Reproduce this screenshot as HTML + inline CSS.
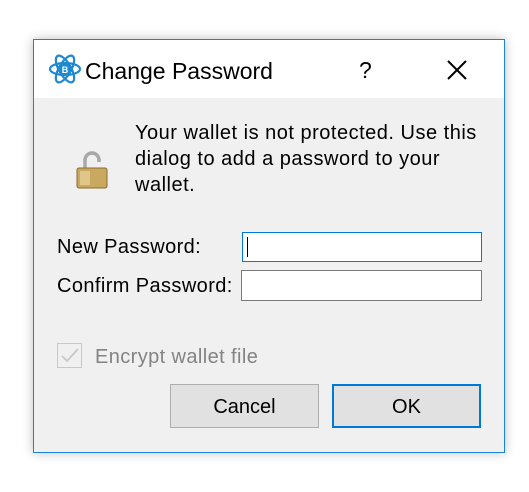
<!DOCTYPE html>
<html><head><style>
body{margin:0;width:529px;height:492px;background:#fff;position:relative;font-family:"Liberation Sans",sans-serif;overflow:hidden}
.win{position:absolute;left:33px;top:39px;width:470px;height:412px;border:1px solid #1883d7;background:#f0f0f0;box-shadow:0 0 10px rgba(0,0,0,.25)}
.tb{position:absolute;left:0;top:0;width:470px;height:58px;background:#fff}
.t{position:absolute;white-space:nowrap;color:#000;letter-spacing:0.4px}
.inp{position:absolute;background:#fff;border:1px solid #7a7a7a;box-sizing:border-box}
.btn{position:absolute;box-sizing:border-box;background:#e1e1e1;border:1px solid #adadad;font-size:20px;text-align:center;line-height:44px}
</style></head><body>
<div class="win">
<div class="tb">
<svg style="position:absolute;left:14px;top:12px" width="34" height="34" viewBox="0 0 34 34" fill="none" stroke="#1e88d0" stroke-width="2.2">
<ellipse cx="17" cy="17" rx="15" ry="6"/><ellipse cx="17" cy="17" rx="15" ry="6" transform="rotate(60 17 17)"/><ellipse cx="17" cy="17" rx="15" ry="6" transform="rotate(-60 17 17)"/>
<circle cx="17" cy="17" r="5.5" fill="#1e88d0" stroke="none"/><text x="17" y="21" font-size="9" fill="#fff" stroke="none" text-anchor="middle" font-weight="bold">B</text></svg>
<div class="t" style="left:51px;top:18px;font-size:23px;letter-spacing:0">Change Password</div>
<div class="t" style="left:325px;top:17px;font-size:23px">?</div>
<svg style="position:absolute;left:412px;top:19px" width="22" height="22"><path d="M2 2L20 20M20 2L2 20" stroke="#000" stroke-width="2"/></svg>
</div>
<svg style="position:absolute;left:42px;top:111px" width="32" height="38" viewBox="0 0 32 38">
<path d="M9 17V9a7 7 0 0 1 14 0v2" fill="none" stroke="#a8a8a8" stroke-width="3.5"/>
<rect x="1" y="17" width="30" height="20" rx="2" fill="#c9a860" stroke="#8a6d2c"/>
<rect x="4" y="20" width="10" height="14" fill="#ead39a" opacity=".7"/></svg>
<div class="t" style="left:101px;top:80px;font-size:20px;line-height:26px;letter-spacing:0.5px">Your wallet is not protected. Use this<br>dialog to add a password to your<br>wallet.</div>
<div class="t" style="left:23px;top:196px;font-size:20px">New Password:</div>
<div class="t" style="left:23px;top:235px;font-size:20px">Confirm Password:</div>
<div class="inp" style="left:208px;top:192px;width:240px;height:30px;border-color:#0078d7"><div style="position:absolute;left:4px;top:4px;width:1px;height:20px;background:#000"></div></div>
<div class="inp" style="left:207px;top:230px;width:241px;height:31px"></div>
<div style="position:absolute;left:23px;top:303px;width:25px;height:25px;border:1px solid #c8c8c8;box-sizing:border-box;background:#f0f0f0">
<svg width="23" height="23"><path d="M4 12l5 5 11-12" fill="none" stroke="#c8c8c8" stroke-width="1.8"/></svg></div>
<div class="t" style="left:61px;top:306px;font-size:20px;color:#838383">Encrypt wallet file</div>
<div class="btn" style="left:136px;top:344px;width:149px;height:44px">Cancel</div>
<div class="btn" style="left:298px;top:344px;width:149px;height:44px;border:2px solid #0078d7;line-height:42px">OK</div>
</div>
</body></html>
